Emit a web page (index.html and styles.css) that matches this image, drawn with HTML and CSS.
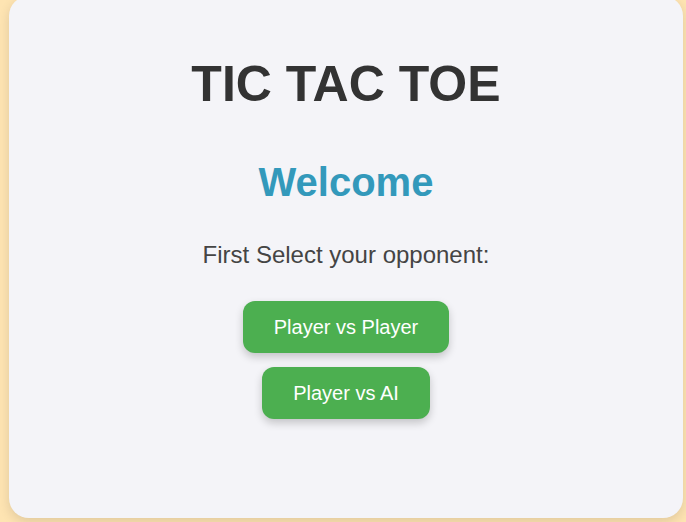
FILE: index.html
```html
<!DOCTYPE html>
<html lang="en">
<head>
<meta charset="utf-8">
<title>Tic Tac Toe</title>
<link rel="stylesheet" href="styles.css">
</head>
<body>
  <main class="card">
    <h1 class="title">TIC TAC TOE</h1>
    <h2 class="welcome">Welcome</h2>
    <p class="prompt">First Select your opponent:</p>
    <div class="choices">
      <button class="btn">Player vs Player</button>
      <button class="btn">Player vs AI</button>
    </div>
  </main>
</body>
</html>
```

FILE: styles.css
```css
html, body {
  margin: 0;
  padding: 0;
}
body {
  background: #fee4b2;
  font-family: "Liberation Sans", Arial, sans-serif;
  height: 522px;
  overflow: hidden;
  padding: 0 3px 0 9px;
}
.card {
  box-sizing: border-box;
  margin-top: -4px;
  height: 522px;
  background: #f4f4f8;
  border-radius: 20px;
  box-shadow: 0 4px 12px rgba(0, 0, 0, 0.12);
  display: flex;
  flex-direction: column;
  align-items: center;
  padding-top: 60px;
}
.title {
  margin: 0;
  font-size: 50px;
  line-height: 57px;
  font-weight: bold;
  color: #333;
}
.welcome {
  margin: 46px 0 0;
  font-size: 40px;
  line-height: 46px;
  font-weight: bold;
  color: #3399bb;
}
.prompt {
  margin: 36px 0 0;
  font-size: 24px;
  line-height: 28px;
  color: #444;
}
.choices {
  margin-top: 32px;
  display: flex;
  flex-direction: column;
  align-items: center;
  gap: 14px;
}
.btn {
  font-family: inherit;
  font-size: 20px;
  line-height: 22px;
  padding: 15px 31px;
  color: #fff;
  background: #4caf50;
  border: none;
  border-radius: 12px;
  box-shadow: 0 4px 8px rgba(0, 0, 0, 0.2);
  cursor: pointer;
}
```
